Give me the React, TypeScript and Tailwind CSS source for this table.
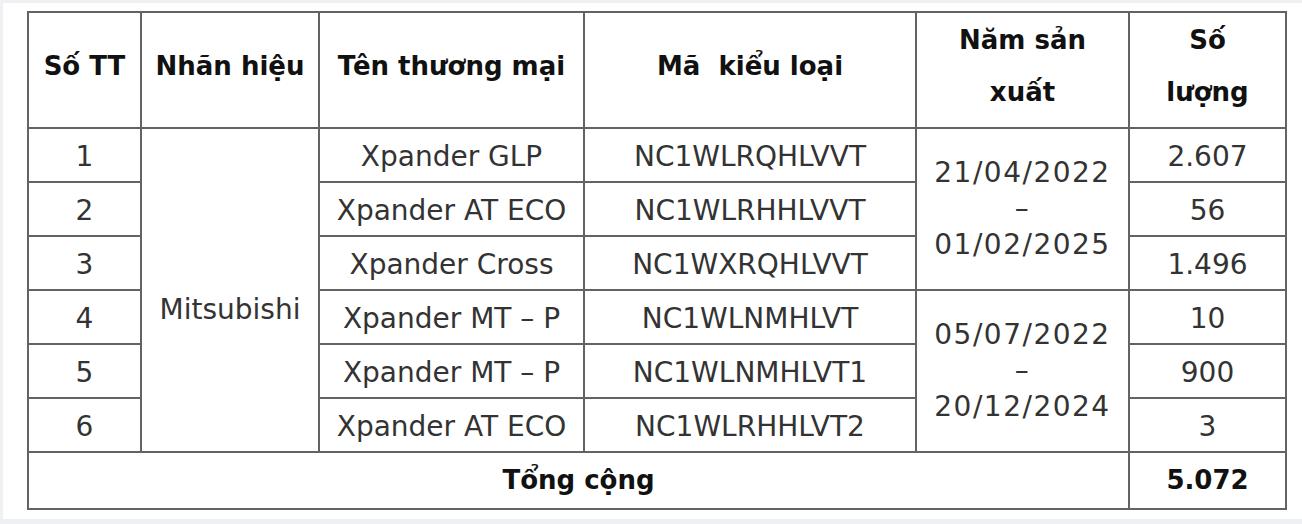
import React from "react";

const line = "border-2 border-[#636363]";

const rows = [
  { no: "1", name: "Xpander GLP", code: "NC1WLRQHLVVT", qty: "2.607" },
  { no: "2", name: "Xpander AT ECO", code: "NC1WLRHHLVVT", qty: "56" },
  { no: "3", name: "Xpander Cross", code: "NC1WXRQHLVVT", qty: "1.496" },
  { no: "4", name: "Xpander MT – P", code: "NC1WLNMHLVT", qty: "10" },
  { no: "5", name: "Xpander MT – P", code: "NC1WLNMHLVT1", qty: "900" },
  { no: "6", name: "Xpander AT ECO", code: "NC1WLRHHLVT2", qty: "3" },
];

const dates: Record<number, [string, string]> = {
  0: ["21/04/2022", "01/02/2025"],
  3: ["05/07/2022", "20/12/2024"],
};

function Th({ children }: { children: React.ReactNode }) {
  return (
    <th
      className={`${line} px-1 pb-[8px] text-center align-middle text-[26px] font-bold leading-[52px] text-[#111] whitespace-pre`}
    >
      {children}
    </th>
  );
}

export default function App() {
  return (
    <div
      className="flex h-[524px] w-[1302px] bg-[#eef0f3] pt-[3px] pb-[5px] pl-[3px]"
      style={{ fontFamily: '"DejaVu Sans", "Noto Sans", sans-serif' }}
    >
      <div className="flex-1 bg-white pt-[8px] pl-[24px]">
        <table className="w-[1258px] table-fixed border-collapse">
          <colgroup>
            <col className="w-[113px]" />
            <col className="w-[178px]" />
            <col className="w-[265px]" />
            <col className="w-[332px]" />
            <col className="w-[213px]" />
            <col className="w-[157px]" />
          </colgroup>
          <thead>
            <tr className="h-[116px]">
              <Th>Số TT</Th>
              <Th>Nhãn hiệu</Th>
              <Th>Tên thương mại</Th>
              <Th>Mã  kiểu loại</Th>
              <Th>
                Năm sản
                <br />
                xuất
              </Th>
              <Th>
                Số
                <br />
                lượng
              </Th>
            </tr>
          </thead>
          <tbody className="text-[28px] text-[#333]">
            {rows.map((r, i) => (
              <tr key={r.no} className="h-[54px]">
                <td className={`${line} pt-1 text-center align-middle`}>{r.no}</td>
                {i === 0 && (
                  <td rowSpan={6} className={`${line} pt-[40px] text-center align-middle`}>
                    Mitsubishi
                  </td>
                )}
                <td className={`${line} pt-1 text-center align-middle whitespace-nowrap`}>
                  {r.name}
                </td>
                <td className={`${line} pt-1 text-center align-middle`}>{r.code}</td>
                {dates[i] && (
                  <td
                    rowSpan={3}
                    className={`${line} text-center align-middle leading-[36px] tracking-[1.5px]`}
                  >
                    {dates[i][0]}
                    <br />–<br />
                    {dates[i][1]}
                  </td>
                )}
                <td className={`${line} pt-1 text-center align-middle`}>{r.qty}</td>
              </tr>
            ))}
            <tr className="h-[57px]">
              <td
                colSpan={5}
                className={`${line} text-center align-middle text-[26px] font-bold text-[#111]`}
              >
                Tổng cộng
              </td>
              <td className={`${line} text-center align-middle text-[26px] font-bold text-[#111]`}>
                5.072
              </td>
            </tr>
          </tbody>
        </table>
      </div>
    </div>
  );
}
